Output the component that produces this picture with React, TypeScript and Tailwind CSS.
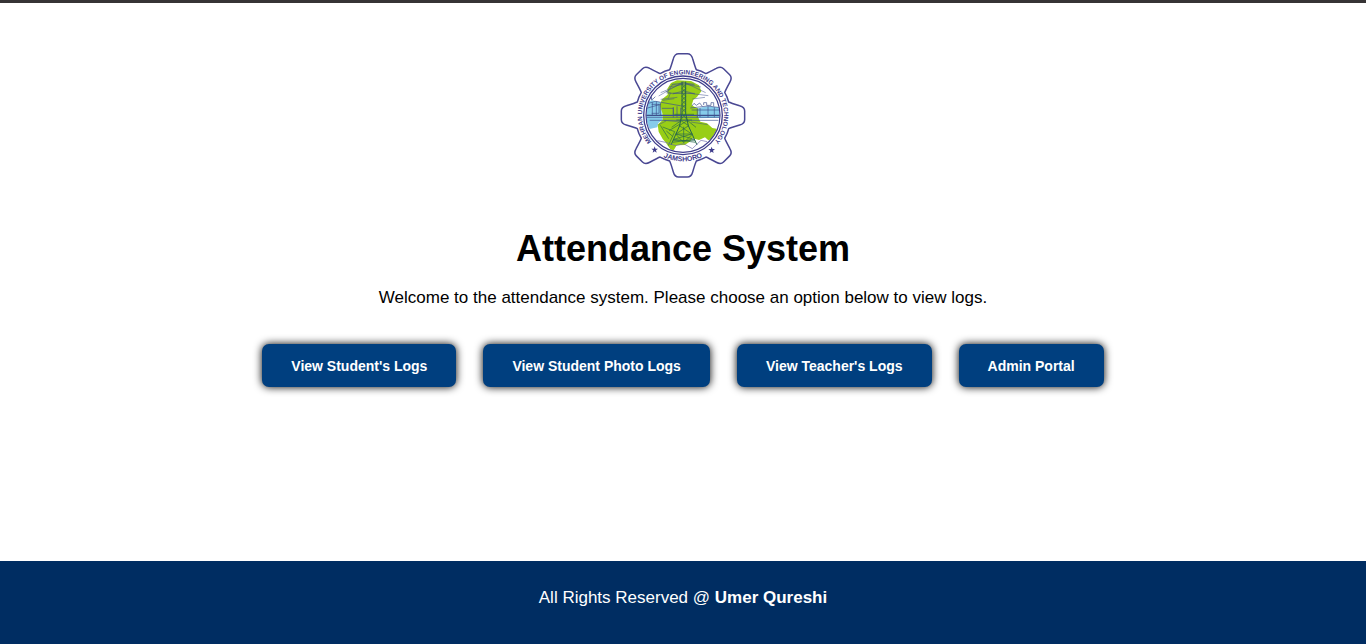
const toothAngles = [0, 45, 90, 135, 180, 225, 270, 315];

const options = ["View Student's Logs", 'View Student Photo Logs', "View Teacher's Logs", 'Admin Portal'];

function Star({ x, y }: { x: number; y: number }) {
  return (
    <path
      transform={`translate(${x} ${y})`}
      d="M0-10 2.500-3 10-3 4 2 6 9 0 5-6 9-4 2-10-3-2.500-3Z"
      fill="#3f3d8c"
    />
  );
}

function Crest() {
  return (
    <svg
      viewBox="2 0 420 420"
      className="size-[140px]"
      role="img"
      aria-label="Mehran University of Engineering and Technology, Jamshoro"
    >
      <defs>
        <path id="ring-top" d="M212 334A123 123 0 1 1 212.100 334" />
        <path id="ring-bottom" d="M74 211A138 138 0 0 0 350 211" />
        <clipPath id="disc">
          <circle cx="212" cy="211" r="110" />
        </clipPath>
      </defs>

      <g fill="none" stroke="#4a4893" strokeWidth="4.500" strokeLinejoin="round">
        {toothAngles.map((a) => (
          <path
            key={a}
            transform={`translate(212 211) rotate(${a})`}
            d="M-55-132L-40-137Q-37-143-29-170Q-25-185-13-185L13-185Q25-185 29-170Q37-143 40-137L55-132"
          />
        ))}
      </g>

      <g clipPath="url(#disc)">
        <path d="M104 170 120 166 145 172 151 225 138 234 135 247 112 252 98 220Z" fill="#86cbea" />
        <path d="M255 190 286 184 325 188 325 218 256 220Z" fill="#86cbea" />
        <path
          d="M176 114 194 106 236 108 260 121 267 139 254 156 243 164 238 181 258 191 257 216 264 230 284 235 300 249 313 251 315 266 300 281 288 286 278 277 260 285 241 280 232 290 217 300 193 301 184 316 174 313 159 291 151 282 139 260 136 239 151 225 150 204 142 181 149 163 166 149 165 131Z"
          fill="#98ce16"
        />
        <g fill="none" stroke="#3d4f8c" strokeWidth="2">
          <path d="M104 176 130 169 214 184M102 190 145 178M100 217H324M112 226H318M120 172V211M132 170V210M144 174V210M149 190H183V210M183 186V217M194 184V217M205 188V217M118 178H140V205H118M234 189 286 183 324 188M238 195H320M255 190V218M263 189V216M287 184V217M306 187V217" />
          <path d="M100 211H324" strokeWidth="3.500" />
          <path d="M107 170 116 156 118 166M113 150 120 164 129 155M238 184 245 175 252 181 262 174 270 184M274 180V173H283V181H296V173H304V184" />
          <path d="M214 110 139 153M214 114 145 143M214 118 170 126M216 112 280 143M216 117 266 126M216 143 288 152M212 144 166 145M163 145 181 117M180 117H245M181 145H247M178 120 214 113 248 120M181 147 214 137 248 147" strokeWidth="1.500" />
          <path d="M145 163 195 157M240 162 278 157M151 166 186 161M174 145 168 160M160 139 178 145M155 226 205 231M139 239 161 228M236 231 286 239" strokeWidth="1.500" />
        </g>
        <g fill="none" stroke="#27664d" strokeWidth="2">
          <path d="M209 110V205L202 242 176 300M220 110V205L228 242 254 300" strokeWidth="3" />
          <path d="M209 118 220 130 209 142 220 154 209 166 220 178 209 190 220 202M220 118 209 130 220 142 209 154 220 166 209 178 220 190 209 202M209 205 226 226 201 242 238 267 185 283 249 292M220 205 204 226 229 242 191 267 245 283 181 292" />
          <path d="M186 208H245M192 225H239M190 267H240M182 287H248M178 247 206 227M251 247 226 227M214 245V291M190 267 214 293 241 267" />
          <path d="M151 246 187 260 168 302M162 258 181 274M144 241 169 281M170 257 203 237" />
        </g>
        <path d="M135 287 160 292 190 302 214 296 240 311 266 286 284 290" fill="none" stroke="#6c6aab" strokeWidth="2" />
      </g>

      <g fill="none" stroke="#3f3d8c">
        <circle cx="212" cy="211" r="118" strokeWidth="4" />
        <circle cx="212" cy="211" r="111" strokeWidth="3.500" />
      </g>

      <g fill="#3f3d8c" className="font-['Liberation_Sans',Arial,sans-serif] font-bold">
        <text fontSize="19" textAnchor="middle">
          <textPath href="#ring-top" startOffset="50%">
            MEHRAN UNIVERSITY OF ENGINEERING AND TECHNOLOGY
          </textPath>
        </text>
        <text fontSize="21" textAnchor="middle">
          <textPath href="#ring-bottom" startOffset="50%">
            JAMSHORO
          </textPath>
        </text>
      </g>
      <Star x={127} y={314} />
      <Star x={298} y={315} />
    </svg>
  );
}

export default function App() {
  return (
    <div className="flex min-h-screen flex-col border-t-3 border-[#363435] bg-white font-['Liberation_Sans',Arial,sans-serif] text-black">
      <main className="flex flex-1 flex-col items-center px-4 pt-[42px] pb-12">
        <Crest />
        <h1 className="mt-10 text-center text-4xl leading-[48px] font-bold">Attendance System</h1>
        <p className="mt-[15px] text-center text-[17px] leading-5">
          Welcome to the attendance system. Please choose an option below to view logs.
        </p>
        <nav aria-label="Logs" className="mt-9 flex flex-wrap justify-center gap-[27px]">
          {options.map((label) => (
            <button
              key={label}
              type="button"
              className="cursor-pointer rounded-[7px] bg-[#003f7f] px-[29px] pt-[13px] pb-[11px] text-[14px] leading-[19px] font-bold text-white shadow-[0_0_9px_#000]"
            >
              {label}
            </button>
          ))}
        </nav>
      </main>
      <footer className="bg-[#002d62] px-4 pt-[27px] pb-9 text-center text-[17px] leading-5 text-white">
        All Rights Reserved @ <strong>Umer Qureshi</strong>
      </footer>
    </div>
  );
}
